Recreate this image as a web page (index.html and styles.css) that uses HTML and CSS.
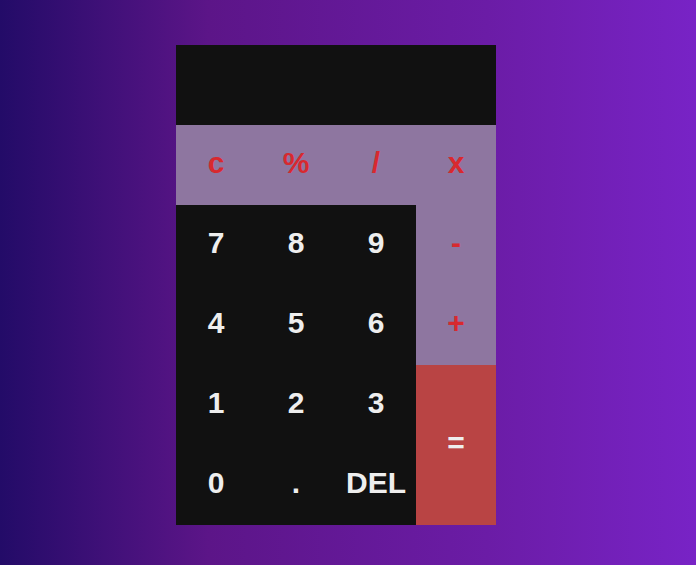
FILE: index.html
```html
<!DOCTYPE html>
<html>
<head>
<meta charset="utf-8">
<link rel="stylesheet" href="styles.css">
</head>
<body>
<div class="calc">
  <div class="display"></div>
  <div class="key op">c</div>
  <div class="key op">%</div>
  <div class="key op">/</div>
  <div class="key op">x</div>
  <div class="key num">7</div>
  <div class="key num">8</div>
  <div class="key num">9</div>
  <div class="key op">-</div>
  <div class="key num">4</div>
  <div class="key num">5</div>
  <div class="key num">6</div>
  <div class="key op">+</div>
  <div class="key num">1</div>
  <div class="key num">2</div>
  <div class="key num">3</div>
  <div class="key eq">=</div>
  <div class="key num">0</div>
  <div class="key num">.</div>
  <div class="key num">DEL</div>
</div>
</body>
</html>
```
FILE: styles.css
```css
html, body {
  margin: 0;
  height: 100%;
}
body {
  background: linear-gradient(to right, #230b68 0%, #5c1588 30%, #6b1ca6 70%, #7823c6 100%);
  padding: 45px 0 0 176px;
  box-sizing: border-box;
  font-family: "Liberation Sans", Arial, sans-serif;
}
.calc {
  display: grid;
  grid-template-columns: repeat(4, 80px);
  grid-template-rows: repeat(6, 80px);
  width: 320px;
  background: #111111;
}
.display {
  grid-column: 1 / 5;
  background: #111111;
}
.key {
  display: flex;
  align-items: center;
  justify-content: center;
  padding-bottom: 4px;
  box-sizing: border-box;
  font-size: 30px;
  font-weight: bold;
}
.op {
  background: #8e76a0;
  color: #d8292f;
}
.num {
  background: #111111;
  color: #eeeeee;
}
.eq {
  grid-row: span 2;
  background: #b94444;
  color: #eeeeee;
}
```
